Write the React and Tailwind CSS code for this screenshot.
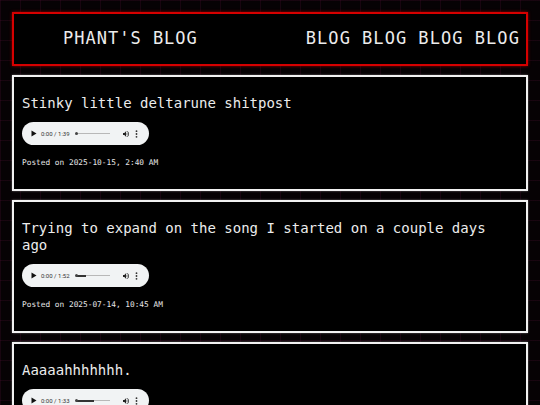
import React from 'react';

const posts = [
  { title: 'Stinky little deltarune shitpost', dur: '1:39', buffered: 0, date: '2025-10-15, 2:40 AM' },
  { title: 'Trying to expand on the song I started on a couple days ago', dur: '1:52', buffered: 10, date: '2025-07-14, 10:45 AM' },
  { title: 'Aaaaahhhhhhh.', dur: '1:33', buffered: 18, date: '2025-06-30, 9:12 PM' },
];

const mono = "font-['DejaVu_Sans_Mono','Liberation_Mono',monospace]";

const AudioPill = ({ dur, buffered }) => (
  <div className="mt-[10px] w-[127px] h-[23px] rounded-full bg-[#f1f3f4] flex items-center pl-[9px] pr-[9px] text-[#1f1f1f]">
    <svg width="6" height="7" viewBox="0 0 6 7" className="shrink-0">
      <path d="M0.5 0.5 L5.5 3.5 L0.5 6.5 Z" fill="#111" />
    </svg>
    <span className="ml-[4px] text-[6px] leading-none font-['Roboto','Liberation_Sans',sans-serif] whitespace-nowrap text-[#333]">
      0:00 / {dur}
    </span>
    <div className="ml-[6px] relative w-[34px] h-[1px] bg-[#b8b8b8]">
      <div className="absolute left-0 top-[-0.5px] h-[2px] bg-[#333]" style={{ width: buffered }} />
      <div className="absolute left-[-1px] top-[-1px] w-[3px] h-[3px] rounded-full bg-[#444]" />
    </div>
    <svg width="8" height="8" viewBox="0 0 24 24" className="ml-[12px] shrink-0">
      <path d="M3 9v6h4l5 5V4L7 9H3z" fill="#222" />
      <path d="M16.5 12A4.5 4.5 0 0 0 14 8v8a4.5 4.5 0 0 0 2.5-4z" fill="#222" />
      <path d="M14 3.2v2.1a7 7 0 0 1 0 13.4v2.1a9 9 0 0 0 0-17.6z" fill="#222" />
    </svg>
    <svg width="3" height="8" viewBox="0 0 3 8" className="ml-[5px] shrink-0">
      <circle cx="1.5" cy="1.2" r="0.9" fill="#333" />
      <circle cx="1.5" cy="4" r="0.9" fill="#333" />
      <circle cx="1.5" cy="6.8" r="0.9" fill="#333" />
    </svg>
  </div>
);

const Post = ({ post }) => (
  <div className="border-2 border-[#f2f2f2] bg-black px-[8px] pb-[21px] shadow-[0_0_2px_rgba(255,255,255,0.4)]">
    <h2 className={`${mono} mt-[18px] text-[14px] leading-[17px] text-[#ececec] font-normal`}>{post.title}</h2>
    <AudioPill dur={post.dur} buffered={post.buffered} />
    <p className={`${mono} mt-[13px] text-[7.8px] leading-[10px] text-[#e6e6e6]`}>Posted on {post.date}</p>
  </div>
);

export default function App() {
  return (
    <div className="h-[405px] overflow-hidden bg-[#060204] bg-[linear-gradient(to_right,rgba(120,20,80,0.16)_1px,transparent_1px),linear-gradient(to_bottom,rgba(120,20,80,0.16)_1px,transparent_1px)] bg-[size:20px_20px] p-[12px]">
      <header className="h-[54px] border-2 border-[#d60000] bg-black shadow-[0_0_3px_rgba(200,0,0,0.7)] flex items-center justify-between pl-[49px] pr-[6px]">
        <span className={`${mono} text-[17px] tracking-[1px] text-[#ececec]`}>PHANT'S BLOG</span>
        <nav className={`${mono} flex gap-[11px] text-[17px] tracking-[1.1px] text-[#ececec]`}>
          <span>BLOG</span>
          <span>BLOG</span>
          <span>BLOG</span>
          <span>BLOG</span>
        </nav>
      </header>
      <main className="mt-[9px] flex flex-col gap-[9px]">
        {posts.map((p, i) => (
          <Post key={i} post={p} />
        ))}
      </main>
    </div>
  );
}
